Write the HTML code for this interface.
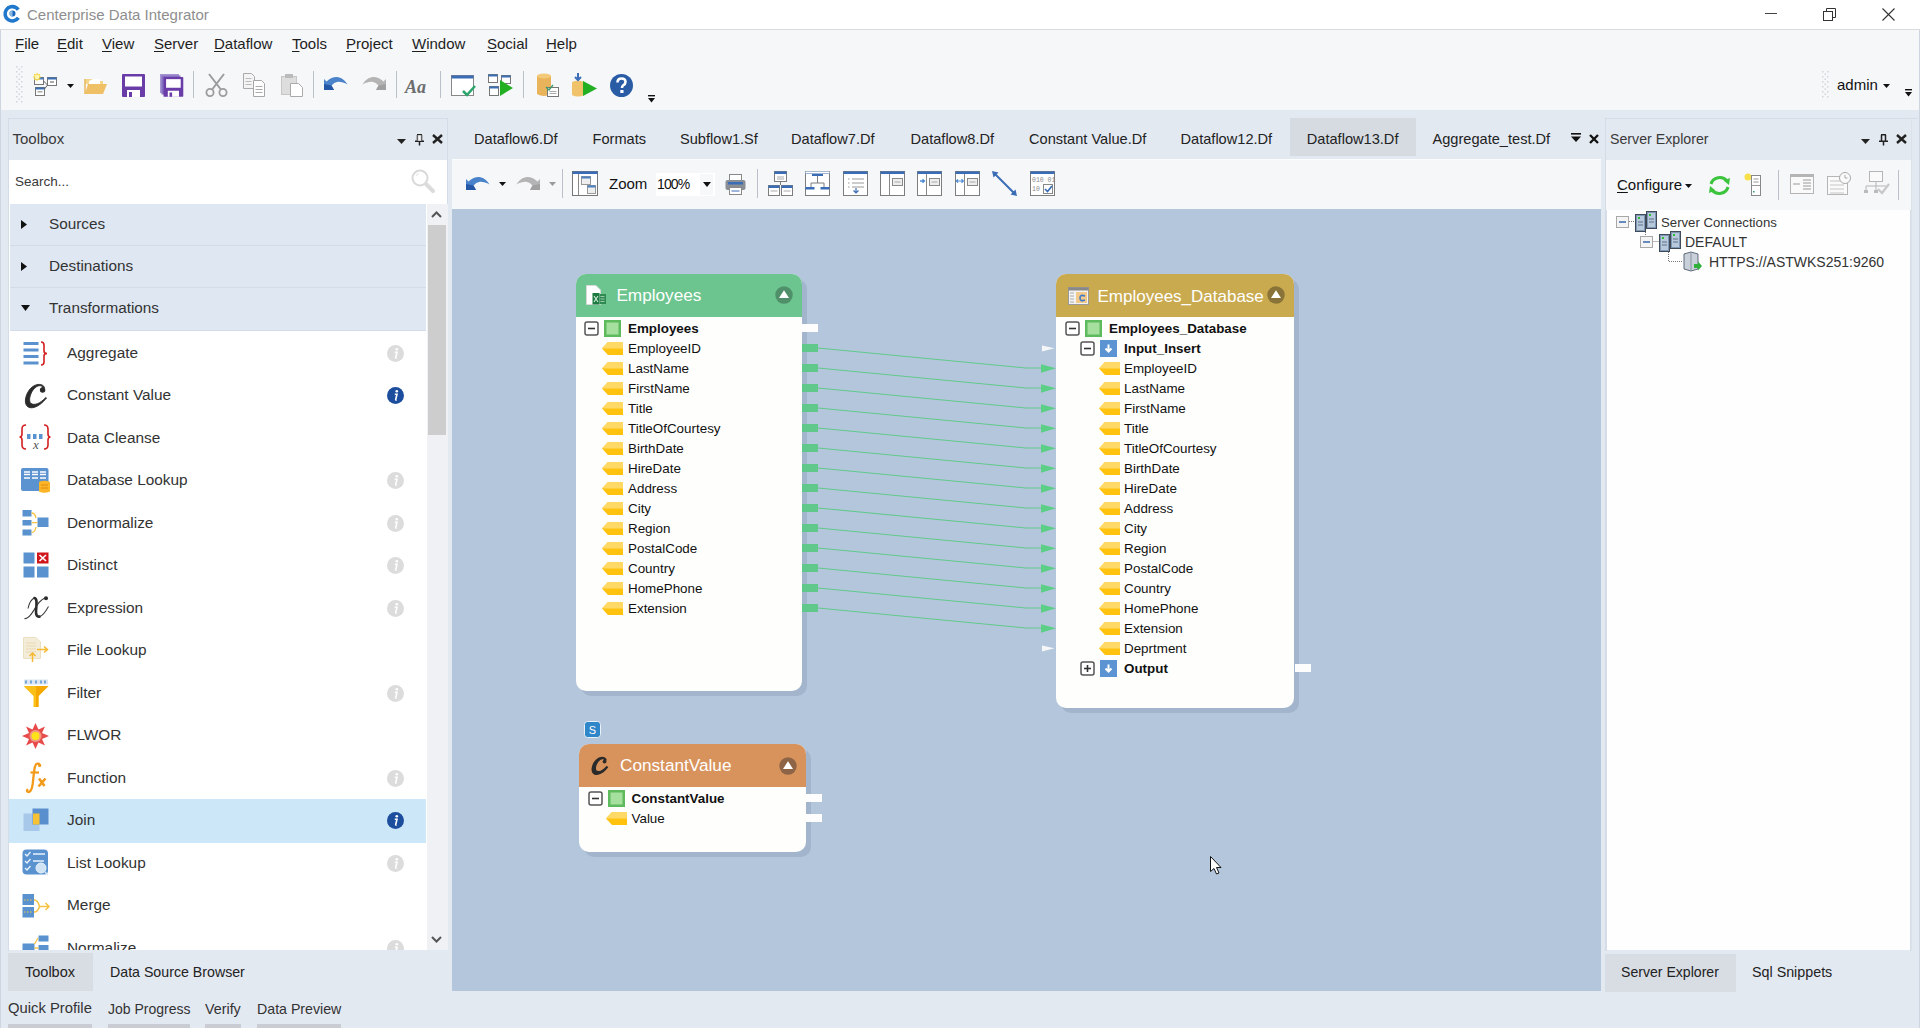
<!DOCTYPE html>
<html><head><meta charset="utf-8">
<style>
*{margin:0;padding:0;box-sizing:border-box}
html,body{width:1920px;height:1028px;overflow:hidden}
body{position:relative;background:#e3e9f1;font-family:"Liberation Sans",sans-serif;color:#222}
.a{position:absolute}
.t{position:absolute;white-space:nowrap;line-height:1}
svg{position:absolute;overflow:visible}
u{text-decoration:underline;text-underline-offset:2px}
</style></head><body>

<div class="a" style="left:0px;top:0px;width:1920px;height:29px;background:#fff;"></div>
<div class="a" style="left:0px;top:29px;width:1920px;height:1px;background:#d9dbde;"></div>
<svg style="left:3px;top:5px;" width="19" height="19" viewBox="0 0 19 19"><circle cx="9.3" cy="8.8" r="7.2" fill="none" stroke="#1f78cc" stroke-width="3.6" stroke-dasharray="36.5 8.7" transform="rotate(33 9.3 8.8)"/><circle cx="9.5" cy="8.6" r="3" fill="#1a68bd"/><path d="M6.5 8.6 A3 3 0 0 1 9.5 5.6 V11.6 A3 3 0 0 1 6.5 8.6Z" fill="#8fb8e0"/></svg>
<div class="t" style="left:27.00px;top:7.30px;font-size:15px;color:#8e8e8e;font-weight:normal;">Centerprise Data Integrator</div>
<svg style="left:1765px;top:13px;" width="12" height="1" viewBox="0 0 12 1"><rect x="0" y="0" width="12" height="1" fill="#444"/></svg>
<svg style="left:1823px;top:8px;" width="13" height="13" viewBox="0 0 13 13"><rect x="0.5" y="3.5" width="9" height="9" fill="none" stroke="#333"/><path d="M3.5 3.5V0.5H12.5V9.5H9.5" fill="none" stroke="#333"/></svg>
<svg style="left:1882px;top:8px;" width="13" height="13" viewBox="0 0 13 13"><path d="M0.5 0.5L12.5 12.5M12.5 0.5L0.5 12.5" stroke="#333" stroke-width="1.1"/></svg>
<div class="a" style="left:0px;top:30px;width:1920px;height:80px;background:#f5f7f9;"></div>
<div class="a" style="left:0px;top:30px;width:1px;height:998px;background:#cdd5e0;"></div>
<div class="a" style="left:1919px;top:30px;width:1px;height:998px;background:#cdd5e0;"></div>
<div class="t" style="left:15.00px;top:36.30px;font-size:15px;color:#1e1e1e;font-weight:normal;"><u>F</u>ile</div>
<div class="t" style="left:57.00px;top:36.30px;font-size:15px;color:#1e1e1e;font-weight:normal;"><u>E</u>dit</div>
<div class="t" style="left:102.00px;top:36.30px;font-size:15px;color:#1e1e1e;font-weight:normal;"><u>V</u>iew</div>
<div class="t" style="left:154.00px;top:36.30px;font-size:15px;color:#1e1e1e;font-weight:normal;"><u>S</u>erver</div>
<div class="t" style="left:214.00px;top:36.30px;font-size:15px;color:#1e1e1e;font-weight:normal;"><u>D</u>ataflow</div>
<div class="t" style="left:292.00px;top:36.30px;font-size:15px;color:#1e1e1e;font-weight:normal;"><u>T</u>ools</div>
<div class="t" style="left:346.00px;top:36.30px;font-size:15px;color:#1e1e1e;font-weight:normal;"><u>P</u>roject</div>
<div class="t" style="left:412.00px;top:36.30px;font-size:15px;color:#1e1e1e;font-weight:normal;"><u>W</u>indow</div>
<div class="t" style="left:487.00px;top:36.30px;font-size:15px;color:#1e1e1e;font-weight:normal;"><u>S</u>ocial</div>
<div class="t" style="left:546.00px;top:36.30px;font-size:15px;color:#1e1e1e;font-weight:normal;"><u>H</u>elp</div>
<svg style="left:16px;top:66px;" width="7" height="38" viewBox="0 0 7 38"><rect x="0" y="0" width="1.5" height="1.5" fill="#d3d7dc"/><rect x="5" y="0" width="1.5" height="1.5" fill="#d3d7dc"/><rect x="2.5" y="2.5" width="1.5" height="1.5" fill="#d3d7dc"/><rect x="0" y="5.0" width="1.5" height="1.5" fill="#d3d7dc"/><rect x="5" y="5.0" width="1.5" height="1.5" fill="#d3d7dc"/><rect x="2.5" y="7.5" width="1.5" height="1.5" fill="#d3d7dc"/><rect x="0" y="10.0" width="1.5" height="1.5" fill="#d3d7dc"/><rect x="5" y="10.0" width="1.5" height="1.5" fill="#d3d7dc"/><rect x="2.5" y="12.5" width="1.5" height="1.5" fill="#d3d7dc"/><rect x="0" y="15.0" width="1.5" height="1.5" fill="#d3d7dc"/><rect x="5" y="15.0" width="1.5" height="1.5" fill="#d3d7dc"/><rect x="2.5" y="17.5" width="1.5" height="1.5" fill="#d3d7dc"/><rect x="0" y="20.0" width="1.5" height="1.5" fill="#d3d7dc"/><rect x="5" y="20.0" width="1.5" height="1.5" fill="#d3d7dc"/><rect x="2.5" y="22.5" width="1.5" height="1.5" fill="#d3d7dc"/><rect x="0" y="25.0" width="1.5" height="1.5" fill="#d3d7dc"/><rect x="5" y="25.0" width="1.5" height="1.5" fill="#d3d7dc"/><rect x="2.5" y="27.5" width="1.5" height="1.5" fill="#d3d7dc"/><rect x="0" y="30.0" width="1.5" height="1.5" fill="#d3d7dc"/><rect x="5" y="30.0" width="1.5" height="1.5" fill="#d3d7dc"/><rect x="2.5" y="32.5" width="1.5" height="1.5" fill="#d3d7dc"/><rect x="0" y="35.0" width="1.5" height="1.5" fill="#d3d7dc"/><rect x="5" y="35.0" width="1.5" height="1.5" fill="#d3d7dc"/></svg>
<svg style="left:33px;top:72px;" width="25" height="25" viewBox="0 0 25 25"><rect x="1.5" y="5.5" width="9" height="7" fill="#fff" stroke="#777"/><rect x="1.5" y="5.5" width="9" height="2" fill="#4a7fc1"/><path d="M4 0.5L5 2.6L7.3 1.8L6.4 4L8.5 5L6.4 6L7.3 8.2L5 7.4L4 9.5L3 7.4L0.7 8.2L1.6 6L-0.5 5L1.6 4L0.7 1.8L3 2.6Z" fill="#f5d63a"/><circle cx="4" cy="5" r="2.3" fill="#fff6b0"/><rect x="14.5" y="5.5" width="9" height="8" fill="#fff" stroke="#777"/><rect x="14.5" y="5.5" width="9" height="2" fill="#3b6fb6"/><rect x="17" y="9" width="4" height="2" fill="#aaa"/><rect x="2.5" y="15.5" width="9" height="8" fill="#fff" stroke="#777"/><rect x="2.5" y="15.5" width="9" height="2" fill="#3b6fb6"/><rect x="4.5" y="19" width="5" height="1.5" fill="#aaa"/><path d="M10.5 9 L14.5 13 M11.5 17 L14.5 13" stroke="#666" stroke-width="1"/></svg>
<svg style="left:67px;top:84px;" width="7" height="4" viewBox="0 0 7 4"><path d="M0 0H7L3.5 4Z" fill="#111"/></svg>
<svg style="left:84px;top:76px;" width="24" height="19" viewBox="0 0 24 19"><path d="M1 3 H8 L10 5 H19 V8 H1Z" fill="#f3d58c"/><path d="M5 5 Q12 1 16 4 L16 8 H5Z" fill="#fff"/><path d="M1 18 L4 8 H23 L19 18Z" fill="#efc066"/><path d="M1 3V18" stroke="#e8b95a" stroke-width="1.5"/></svg>
<svg style="left:122px;top:74px;" width="23" height="23" viewBox="0 0 23 23"><rect x="0" y="0" width="23" height="23" rx="1" fill="#6a3ca8"/><rect x="3" y="2.5" width="17" height="10" fill="#fff"/><rect x="5" y="16" width="13" height="7" fill="#fff"/><rect x="7" y="18" width="3" height="5" fill="#6a3ca8"/></svg>
<svg style="left:160px;top:74px;" width="24" height="23" viewBox="0 0 24 23"><rect x="0" y="0" width="19" height="19" fill="#a595d2"/><rect x="1.5" y="1.5" width="19" height="19" fill="#8570c0"/><g transform="translate(3.5 3) scale(0.86)"><rect x="0" y="0" width="23" height="23" rx="1" fill="#6a3ca8"/><rect x="3" y="2.5" width="17" height="10" fill="#fff"/><rect x="5" y="16" width="13" height="7" fill="#fff"/><rect x="7" y="18" width="3" height="5" fill="#6a3ca8"/></g></svg>
<div class="a" style="left:193px;top:71px;width:1px;height:27px;background:#b9c0ca;"></div>
<svg style="left:205px;top:73px;" width="23" height="24" viewBox="0 0 23 24"><path d="M4 1 L15.5 16 M19 1 L7.5 16" stroke="#9c9c9c" stroke-width="2"/><circle cx="5" cy="19.5" r="3.6" fill="none" stroke="#9c9c9c" stroke-width="1.8"/><circle cx="18" cy="19.5" r="3.6" fill="none" stroke="#9c9c9c" stroke-width="1.8"/></svg>
<svg style="left:243px;top:73px;" width="22" height="24" viewBox="0 0 22 24"><path d="M0.5 0.5H8.5L11.5 3.5V15.5H0.5Z" fill="#f4f4f4" stroke="#aaa"/><path d="M2.5 5.5h6M2.5 8.5h6M2.5 11.5h6" stroke="#bbb"/><path d="M10.5 7.5H18.5L21.5 10.5V23.5H10.5Z" fill="#fff" stroke="#a6a6a6"/><path d="M12.5 13.5h7M12.5 16.5h7M12.5 19.5h7" stroke="#aaa"/></svg>
<svg style="left:281px;top:73px;" width="22" height="24" viewBox="0 0 22 24"><rect x="0.5" y="3.5" width="15" height="18" fill="#ddd" stroke="#c6c6c6"/><rect x="4" y="1" width="8" height="4" fill="#bbb"/><path d="M9.5 10.5H17.5L21.5 14.5V23.5H9.5Z" fill="#fff" stroke="#aaa"/></svg>
<div class="a" style="left:313px;top:71px;width:1px;height:27px;background:#b9c0ca;"></div>
<svg style="left:323px;top:76px;" width="25" height="15" viewBox="0 0 25 15"><path d="M1 3 L3.5 5.5 C7 2, 11 0.8, 14 1 C18 1.3, 22 4, 24.5 8.5 C21 6.5, 17 5.5, 14 6 C12 6.3, 10.5 7.5, 8.5 9.5 L11 14 H1 Z" fill="#4a83c9"/><path d="M1 8 L1 14 H11 L8.5 9.5Z" fill="#2457a6"/></svg>
<svg style="left:362px;top:76px;" width="25" height="15" viewBox="0 0 25 15"><path d="M24 3 L21.5 5.5 C18 2, 14 0.8, 11 1 C7 1.3, 3 4, 0.5 8.5 C4 6.5, 8 5.5, 11 6 C13 6.3, 14.5 7.5, 16.5 9.5 L14 14 H24 Z" fill="#b4b4b4"/><path d="M24 8 L24 14 H14 L16.5 9.5Z" fill="#a0a0a0"/></svg>
<div class="a" style="left:396px;top:71px;width:1px;height:27px;background:#b9c0ca;"></div>
<div class="t" style="left:405.00px;top:77.76px;font-size:18px;color:#6d6d6d;font-weight:bold;font-family:'Liberation Serif',serif;"><i>Aa</i></div>
<div class="a" style="left:440px;top:71px;width:1px;height:27px;background:#b9c0ca;"></div>
<svg style="left:451px;top:75px;" width="25" height="22" viewBox="0 0 25 22"><rect x="0.5" y="0.5" width="22" height="20" fill="#fff" stroke="#888"/><rect x="0.5" y="0.5" width="22" height="3" fill="#3a6db5"/><path d="M12 16 L16 20 L24 11" stroke="#2aa56c" stroke-width="2.5" fill="none"/></svg>
<svg style="left:488px;top:74px;" width="26" height="23" viewBox="0 0 26 23"><rect x="0.5" y="0.5" width="9" height="8" fill="#fff" stroke="#777"/><rect x="0.5" y="0.5" width="9" height="2" fill="#3b6fb6"/><rect x="13.5" y="1.5" width="9" height="8" fill="#fff" stroke="#777"/><rect x="13.5" y="1.5" width="9" height="2" fill="#3b6fb6"/><rect x="1.5" y="12.5" width="9" height="9" fill="#fff" stroke="#777"/><rect x="1.5" y="12.5" width="9" height="2" fill="#3b6fb6"/><path d="M12 6 L25 14 L12 22Z" fill="#22b022"/></svg>
<div class="a" style="left:523px;top:71px;width:1px;height:27px;background:#b9c0ca;"></div>
<svg style="left:537px;top:73px;" width="23" height="25" viewBox="0 0 23 25"><path d="M0 3 Q7 -1 14 3 V21 Q7 25 0 21Z" fill="#e9b35b"/><ellipse cx="7" cy="3" rx="7" ry="2.5" fill="#f3c978"/><rect x="10.5" y="14.5" width="11" height="9" fill="#fff" stroke="#777"/><path d="M12.5 18.5h7M12.5 20.5h7" stroke="#aaa"/><path d="M9 14 L12 17 L16 12" stroke="#3a9a6a" stroke-width="1.3" fill="none"/></svg>
<svg style="left:572px;top:73px;" width="25" height="24" viewBox="0 0 25 24"><path d="M0 9 Q6 6 12 9 V22 Q6 25 0 22Z" fill="#f0c26a"/><path d="M6 0V7 M3 4 L6 7 L9 4" stroke="#3c6fb8" stroke-width="2" fill="none"/><path d="M11 8 L25 15.5 L11 23Z" fill="#22b022"/></svg>
<svg style="left:610px;top:74px;" width="23" height="23" viewBox="0 0 23 23"><circle cx="11.5" cy="11.5" r="11.5" fill="#2a5ca6"/><path d="M7.5 8.5 Q7.5 4.5 11.5 4.5 Q15.5 4.5 15.5 8 Q15.5 10 13 11.5 Q12 12.2 12 14" stroke="#fff" stroke-width="2.6" fill="none"/><rect x="10.3" y="16" width="3.2" height="3" fill="#fff"/></svg>
<svg style="left:648px;top:95px;" width="7" height="9" viewBox="0 0 7 9"><rect x="0" y="0" width="7" height="1.4" fill="#111"/><path d="M0 3 H7 L3.5 7.5Z" fill="#111"/></svg>
<svg style="left:1822px;top:71px;" width="7" height="27" viewBox="0 0 7 27"><rect x="0" y="0" width="1.5" height="1.5" fill="#d3d7dc"/><rect x="5" y="0" width="1.5" height="1.5" fill="#d3d7dc"/><rect x="2.5" y="2.5" width="1.5" height="1.5" fill="#d3d7dc"/><rect x="0" y="5.0" width="1.5" height="1.5" fill="#d3d7dc"/><rect x="5" y="5.0" width="1.5" height="1.5" fill="#d3d7dc"/><rect x="2.5" y="7.5" width="1.5" height="1.5" fill="#d3d7dc"/><rect x="0" y="10.0" width="1.5" height="1.5" fill="#d3d7dc"/><rect x="5" y="10.0" width="1.5" height="1.5" fill="#d3d7dc"/><rect x="2.5" y="12.5" width="1.5" height="1.5" fill="#d3d7dc"/><rect x="0" y="15.0" width="1.5" height="1.5" fill="#d3d7dc"/><rect x="5" y="15.0" width="1.5" height="1.5" fill="#d3d7dc"/><rect x="2.5" y="17.5" width="1.5" height="1.5" fill="#d3d7dc"/><rect x="0" y="20.0" width="1.5" height="1.5" fill="#d3d7dc"/><rect x="5" y="20.0" width="1.5" height="1.5" fill="#d3d7dc"/><rect x="2.5" y="22.5" width="1.5" height="1.5" fill="#d3d7dc"/><rect x="0" y="25.0" width="1.5" height="1.5" fill="#d3d7dc"/><rect x="5" y="25.0" width="1.5" height="1.5" fill="#d3d7dc"/></svg>
<div class="t" style="left:1837.00px;top:77.30px;font-size:15px;color:#111;font-weight:normal;">admin</div>
<svg style="left:1883px;top:84px;" width="7" height="4" viewBox="0 0 7 4"><path d="M0 0H7L3.5 4Z" fill="#111"/></svg>
<svg style="left:1905px;top:89px;" width="7" height="9" viewBox="0 0 7 9"><rect x="0" y="0" width="7" height="1.4" fill="#111"/><path d="M0 3 H7 L3.5 7.5Z" fill="#111"/></svg>
<div class="a" style="left:8px;top:118px;width:440px;height:1px;background:#d4dce7;"></div>
<div class="a" style="left:8px;top:118px;width:1px;height:873px;background:#d4dce7;"></div>
<div class="a" style="left:447px;top:118px;width:1px;height:86px;background:#d4dce7;"></div>
<div class="t" style="left:12.50px;top:131.30px;font-size:15px;color:#3a3a3a;font-weight:normal;">Toolbox</div>
<svg style="left:397px;top:139px;" width="9" height="5" viewBox="0 0 9 5"><path d="M0 0H9L4.5 5Z" fill="#222"/></svg>
<svg style="left:415px;top:134px;" width="9" height="12" viewBox="0 0 9 12"><path d="M2 0.8H7M2.5 1V7M6.5 1V7M0 7.3H9M4.5 7.5V11.5" stroke="#222" stroke-width="1.5" fill="none"/><rect x="2.5" y="1" width="4" height="6" fill="#fff" opacity="0.6"/></svg>
<svg style="left:432px;top:134px;" width="11" height="10" viewBox="0 0 11 10"><path d="M1 1L10 9M10 1L1 9" stroke="#222" stroke-width="2.4"/></svg>
<div class="a" style="left:9px;top:160px;width:438px;height:44px;background:#fff;"></div>
<div class="t" style="left:15.00px;top:175.07px;font-size:13.5px;color:#3a3a3a;font-weight:normal;">Search...</div>
<svg style="left:410px;top:168px;" width="27" height="27" viewBox="0 0 27 27"><circle cx="10" cy="10" r="7.5" fill="none" stroke="#d9d9d9" stroke-width="2"/><path d="M16 16L23 23" stroke="#dcdcdc" stroke-width="4" stroke-linecap="round"/><path d="M6 8 Q7 6 9 5.5" stroke="#e6e6e6" stroke-width="1.2" fill="none"/></svg>
<div class="a" style="left:9px;top:204px;width:418px;height:746px;background:#fff;"></div>
<div class="a" style="left:10px;top:204px;width:416px;height:42px;background:#dfe7f2;"></div>
<div class="a" style="left:10px;top:245px;width:416px;height:1px;background:#d3dce8;"></div>
<svg style="left:21px;top:219.5px;" width="6" height="9" viewBox="0 0 6 9"><path d="M0 0L6 4.5L0 9Z" fill="#111"/></svg>
<div class="t" style="left:49.00px;top:215.55px;font-size:15.3px;color:#333;font-weight:normal;">Sources</div>
<div class="a" style="left:10px;top:246px;width:416px;height:42px;background:#dfe7f2;"></div>
<div class="a" style="left:10px;top:287px;width:416px;height:1px;background:#d3dce8;"></div>
<svg style="left:21px;top:261.5px;" width="6" height="9" viewBox="0 0 6 9"><path d="M0 0L6 4.5L0 9Z" fill="#111"/></svg>
<div class="t" style="left:49.00px;top:257.55px;font-size:15.3px;color:#333;font-weight:normal;">Destinations</div>
<div class="a" style="left:10px;top:288px;width:416px;height:43px;background:#dfe7f2;"></div>
<div class="a" style="left:10px;top:330px;width:416px;height:1px;background:#d3dce8;"></div>
<svg style="left:21px;top:305.0px;" width="9" height="6" viewBox="0 0 9 6"><path d="M0 0H9L4.5 6Z" fill="#111"/></svg>
<div class="t" style="left:49.00px;top:299.55px;font-size:15.3px;color:#333;font-weight:normal;">Transformations</div>
<div class="a" style="left:427px;top:204px;width:21px;height:746px;background:#eff1f4;"></div>
<svg style="left:431px;top:211px;" width="11" height="7" viewBox="0 0 11 7"><path d="M1 6L5.5 1.5L10 6" stroke="#555" stroke-width="2" fill="none"/></svg>
<div class="a" style="left:428px;top:225px;width:18px;height:210px;background:#cdcdcd;"></div>
<svg style="left:431px;top:936px;" width="11" height="7" viewBox="0 0 11 7"><path d="M1 1L5.5 5.5L10 1" stroke="#555" stroke-width="2" fill="none"/></svg>
<div class="a" style="left:9px;top:331px;width:418px;height:619px;overflow:hidden">
<div class="t" style="left:58.00px;top:13.96px;font-size:15.4px;color:#333;font-weight:normal;">Aggregate</div>
<svg style="left:377.5px;top:13.5px;" width="17" height="17" viewBox="0 0 17 17"><circle cx="8.5" cy="8.5" r="8.5" fill="#dcdcdc"/><circle cx="9.8" cy="4.3" r="1.3" fill="#fff"/><path d="M7.8 7.3 L10 7.3 L8.7 12.5 Q8.6 13.3 9.6 12.8" stroke="#fff" stroke-width="1.6" fill="none"/></svg>
<div class="t" style="left:58.00px;top:56.46px;font-size:15.4px;color:#333;font-weight:normal;">Constant Value</div>
<svg style="left:377.5px;top:56.0px;" width="17" height="17" viewBox="0 0 17 17"><circle cx="8.5" cy="8.5" r="8.5" fill="#1d4e9e"/><circle cx="9.8" cy="4.3" r="1.3" fill="#fff"/><path d="M7.8 7.3 L10 7.3 L8.7 12.5 Q8.6 13.3 9.6 12.8" stroke="#fff" stroke-width="1.6" fill="none"/></svg>
<div class="t" style="left:58.00px;top:98.96px;font-size:15.4px;color:#333;font-weight:normal;">Data Cleanse</div>
<div class="t" style="left:58.00px;top:141.46px;font-size:15.4px;color:#333;font-weight:normal;">Database Lookup</div>
<svg style="left:377.5px;top:141.0px;" width="17" height="17" viewBox="0 0 17 17"><circle cx="8.5" cy="8.5" r="8.5" fill="#dcdcdc"/><circle cx="9.8" cy="4.3" r="1.3" fill="#fff"/><path d="M7.8 7.3 L10 7.3 L8.7 12.5 Q8.6 13.3 9.6 12.8" stroke="#fff" stroke-width="1.6" fill="none"/></svg>
<div class="t" style="left:58.00px;top:183.96px;font-size:15.4px;color:#333;font-weight:normal;">Denormalize</div>
<svg style="left:377.5px;top:183.5px;" width="17" height="17" viewBox="0 0 17 17"><circle cx="8.5" cy="8.5" r="8.5" fill="#dcdcdc"/><circle cx="9.8" cy="4.3" r="1.3" fill="#fff"/><path d="M7.8 7.3 L10 7.3 L8.7 12.5 Q8.6 13.3 9.6 12.8" stroke="#fff" stroke-width="1.6" fill="none"/></svg>
<div class="t" style="left:58.00px;top:226.46px;font-size:15.4px;color:#333;font-weight:normal;">Distinct</div>
<svg style="left:377.5px;top:226.0px;" width="17" height="17" viewBox="0 0 17 17"><circle cx="8.5" cy="8.5" r="8.5" fill="#dcdcdc"/><circle cx="9.8" cy="4.3" r="1.3" fill="#fff"/><path d="M7.8 7.3 L10 7.3 L8.7 12.5 Q8.6 13.3 9.6 12.8" stroke="#fff" stroke-width="1.6" fill="none"/></svg>
<div class="t" style="left:58.00px;top:268.96px;font-size:15.4px;color:#333;font-weight:normal;">Expression</div>
<svg style="left:377.5px;top:268.5px;" width="17" height="17" viewBox="0 0 17 17"><circle cx="8.5" cy="8.5" r="8.5" fill="#dcdcdc"/><circle cx="9.8" cy="4.3" r="1.3" fill="#fff"/><path d="M7.8 7.3 L10 7.3 L8.7 12.5 Q8.6 13.3 9.6 12.8" stroke="#fff" stroke-width="1.6" fill="none"/></svg>
<div class="t" style="left:58.00px;top:311.46px;font-size:15.4px;color:#333;font-weight:normal;">File Lookup</div>
<div class="t" style="left:58.00px;top:353.96px;font-size:15.4px;color:#333;font-weight:normal;">Filter</div>
<svg style="left:377.5px;top:353.5px;" width="17" height="17" viewBox="0 0 17 17"><circle cx="8.5" cy="8.5" r="8.5" fill="#dcdcdc"/><circle cx="9.8" cy="4.3" r="1.3" fill="#fff"/><path d="M7.8 7.3 L10 7.3 L8.7 12.5 Q8.6 13.3 9.6 12.8" stroke="#fff" stroke-width="1.6" fill="none"/></svg>
<div class="t" style="left:58.00px;top:396.46px;font-size:15.4px;color:#333;font-weight:normal;">FLWOR</div>
<div class="t" style="left:58.00px;top:438.96px;font-size:15.4px;color:#333;font-weight:normal;">Function</div>
<svg style="left:377.5px;top:438.5px;" width="17" height="17" viewBox="0 0 17 17"><circle cx="8.5" cy="8.5" r="8.5" fill="#dcdcdc"/><circle cx="9.8" cy="4.3" r="1.3" fill="#fff"/><path d="M7.8 7.3 L10 7.3 L8.7 12.5 Q8.6 13.3 9.6 12.8" stroke="#fff" stroke-width="1.6" fill="none"/></svg>
<div class="a" style="left:0px;top:468px;width:417px;height:44px;background:#cce7f8;"></div>
<div class="t" style="left:58.00px;top:481.46px;font-size:15.4px;color:#333;font-weight:normal;">Join</div>
<svg style="left:377.5px;top:481.0px;" width="17" height="17" viewBox="0 0 17 17"><circle cx="8.5" cy="8.5" r="8.5" fill="#1d4e9e"/><circle cx="9.8" cy="4.3" r="1.3" fill="#fff"/><path d="M7.8 7.3 L10 7.3 L8.7 12.5 Q8.6 13.3 9.6 12.8" stroke="#fff" stroke-width="1.6" fill="none"/></svg>
<div class="t" style="left:58.00px;top:523.96px;font-size:15.4px;color:#333;font-weight:normal;">List Lookup</div>
<svg style="left:377.5px;top:523.5px;" width="17" height="17" viewBox="0 0 17 17"><circle cx="8.5" cy="8.5" r="8.5" fill="#dcdcdc"/><circle cx="9.8" cy="4.3" r="1.3" fill="#fff"/><path d="M7.8 7.3 L10 7.3 L8.7 12.5 Q8.6 13.3 9.6 12.8" stroke="#fff" stroke-width="1.6" fill="none"/></svg>
<div class="t" style="left:58.00px;top:566.46px;font-size:15.4px;color:#333;font-weight:normal;">Merge</div>
<div class="t" style="left:58.00px;top:608.96px;font-size:15.4px;color:#333;font-weight:normal;">Normalize</div>
<svg style="left:377.5px;top:608.5px;" width="17" height="17" viewBox="0 0 17 17"><circle cx="8.5" cy="8.5" r="8.5" fill="#dcdcdc"/><circle cx="9.8" cy="4.3" r="1.3" fill="#fff"/><path d="M7.8 7.3 L10 7.3 L8.7 12.5 Q8.6 13.3 9.6 12.8" stroke="#fff" stroke-width="1.6" fill="none"/></svg>
<svg style="left:14px;top:10px;" width="26" height="25" viewBox="0 0 26 25"><rect x="0.5" y="1" width="15" height="3" fill="#5a92d0"/><rect x="0.5" y="7.5" width="15" height="3" fill="#5a92d0"/><rect x="0.5" y="14" width="15" height="3" fill="#5a92d0"/><rect x="0.5" y="20.5" width="15" height="3" fill="#5a92d0"/><path d="M18 1 Q21 1 21 4 V10 Q21 12.5 24 12.5 Q21 12.5 21 15 V21 Q21 24 18 24" stroke="#d42020" stroke-width="1.6" fill="none"/></svg>
<svg style="left:9px;top:47px" width="36" height="36" viewBox="0 0 36 36"><path d="M26.5 9.5 C25 5.5, 18 5, 13 10 C8 15, 5.5 24, 9 28 C12 31.5, 20 30.5, 28.5 20 L27.8 19.4 C22 26, 16 27.5, 13 25.5 C10.5 23.5, 11.5 17, 15 12 C17.5 8.5, 21 7, 23.5 8 C24.8 8.6, 24.5 10, 23.5 10.5Z" fill="#2b2b2b" stroke="#2b2b2b" stroke-width="0.9"/><circle cx="24.6" cy="12" r="2.7" fill="#2b2b2b"/></svg>
<svg style="left:11px;top:93px;" width="31" height="28" viewBox="0 0 31 28"><path d="M6 1 Q2 1 2 5 V10 Q2 13 -0.5 13 Q2 13 2 16 V21 Q2 25 6 25" stroke="#d42020" stroke-width="1.6" fill="none"/><path d="M24 1 Q28 1 28 5 V10 Q28 13 30.5 13 Q28 13 28 16 V21 Q28 25 24 25" stroke="#d42020" stroke-width="1.6" fill="none"/><rect x="7" y="10" width="3.5" height="5" fill="#5a92d0"/><rect x="13" y="10" width="3.5" height="5" fill="#5a92d0"/><rect x="19" y="10" width="3.5" height="5" fill="#5a92d0"/></svg>
<div class="t" style="left:24.00px;top:107.00px;font-size:13px;color:#555;font-weight:normal;font-family:'Liberation Serif',serif;"><i>x</i></div>
<svg style="left:12px;top:137px;" width="29" height="26" viewBox="0 0 29 26"><rect x="0" y="0" width="27.5" height="23" rx="2" fill="#5b92d0"/><path d="M3 4h6M3 6.5h6M11 4h6M11 6.5h6M19 4h6M19 6.5h6M3 10h6M11 10h6M19 10h6" stroke="#fff" stroke-width="1.3"/><path d="M18 14 Q23 11.5 29 14 V23.5 Q23 26 18 23.5Z" fill="#fbb526"/><path d="M20 17h7M20 20h7" stroke="#e08a10" stroke-width="1"/></svg>
<svg style="left:13px;top:179px;" width="27" height="26" viewBox="0 0 27 26"><rect x="0.5" y="0" width="9" height="6.5" fill="#5a92d0"/><rect x="0.5" y="10" width="9" height="5.5" fill="#5a92d0"/><rect x="0.5" y="19.5" width="9" height="6" fill="#5a92d0"/><rect x="15.5" y="7.5" width="11" height="9.5" fill="#5a92d0"/><path d="M9.5 3 Q13 3 14 8 M9.5 12.7 H15.5 M9.5 22.5 Q13 22.5 14 17" stroke="#f5c242" stroke-width="1.3" fill="none"/></svg>
<svg style="left:14px;top:221px;" width="26" height="26" viewBox="0 0 26 26"><rect x="0.5" y="0.5" width="11" height="11" fill="#5a92d0"/><rect x="14" y="0.5" width="11.5" height="11" fill="#d0161b"/><path d="M16.5 3 L23 9 M23 3 L16.5 9" stroke="#fff" stroke-width="1.7"/><rect x="0.5" y="14.5" width="11" height="11" fill="#5a92d0"/><rect x="14" y="14.5" width="11.5" height="11" fill="#5a92d0"/></svg>
<svg style="left:9px;top:259px;" width="36" height="36" viewBox="0 0 36 36"><path d="M10 18.5 C11 14, 13.5 9, 16.5 8" stroke="#333" stroke-width="1.1" fill="none"/><path d="M16.5 8 C19.5 8.5, 18.5 15, 18 21 C17.8 25, 19 27, 21.5 26.6" stroke="#2b2b2b" stroke-width="2.6" fill="none" stroke-linecap="round"/><path d="M21.5 26.6 C25 26, 28 21, 30.5 16.5" stroke="#444" stroke-width="1.1" fill="none"/><path d="M6.5 28.5 C10 29.5, 13 25, 16 20 C19 14.5, 22 10, 27 8" stroke="#333" stroke-width="1.2" fill="none"/><circle cx="28" cy="8.2" r="2" fill="#2b2b2b"/></svg>
<svg style="left:14px;top:306px;" width="26" height="26" viewBox="0 0 26 26"><path d="M0.5 0.5H13L17.5 5V21.5H0.5Z" fill="#f3ecd8" stroke="#eadfc0"/><path d="M3 6h10M3 9h10M3 12h10M3 15h10" stroke="#ead9b0" stroke-width="1"/><path d="M14 12.5H24M21 9.5L24.5 12.5L21 15.5" stroke="#f5b932" stroke-width="1.5" fill="none"/><path d="M9.5 25V16M6.5 19L9.5 16L12.5 19" stroke="#f5b932" stroke-width="1.5" fill="none"/></svg>
<svg style="left:14px;top:348px;" width="26" height="29" viewBox="0 0 26 29"><rect x="1" y="0.5" width="24" height="5" fill="#dbe6f2"/><path d="M3 1.5v3M8 1.5v3M13 1.5v3M18 1.5v3M22 1.5v3" stroke="#5a92d0" stroke-width="1.5"/><path d="M0.5 7H25.5L15.5 17V28H10.5V17Z" fill="#fbbf1a"/><path d="M13 7H25.5L15.5 17V28H13Z" fill="#f6a800"/></svg>
<svg style="left:13px;top:392px;" width="27" height="26" viewBox="0 0 27 26"><path d="M13.5 0 L16.5 6.5 L23 3.5 L20 10 L27 13 L20 16 L23 22.5 L16.5 19.5 L13.5 26 L10.5 19.5 L4 22.5 L7 16 L0 13 L7 10 L4 3.5 L10.5 6.5Z" fill="#e84b4b"/><circle cx="13.5" cy="13" r="6" fill="#f29a82"/><circle cx="13.5" cy="13" r="4" fill="#ffe21a"/></svg>
<svg style="left:9px;top:428px;" width="36" height="36" viewBox="0 0 36 36"><path d="M22 6.2 C21 4, 18 4, 17 7.5 C16 11, 15.5 18, 14.7 25 C14 30, 13 32.8, 10.5 33 C9 33, 8.6 31.5, 9.3 30.8" stroke="#f39a1a" stroke-width="2.3" fill="none" stroke-linecap="round"/><circle cx="21.6" cy="6.4" r="1.6" fill="#f39a1a"/><path d="M12.5 13.5H21" stroke="#f39a1a" stroke-width="2.2"/><path d="M21 19.5L26.5 27M27.5 19.5L20.5 27.5" stroke="#f39a1a" stroke-width="2.6"/></svg>
<svg style="left:14px;top:477px;" width="26" height="24" viewBox="0 0 26 24"><rect x="0.5" y="5.5" width="16" height="17.5" fill="#a8c8ea"/><rect x="9.5" y="0.5" width="16" height="16" fill="#5a8fce"/><rect x="10" y="5.5" width="6.5" height="11" fill="#f6c233"/></svg>
<svg style="left:13px;top:518px;" width="27" height="27" viewBox="0 0 27 27"><rect x="0.5" y="0.5" width="25.5" height="25" rx="4" fill="#5a92d0"/><path d="M3 5 L5 7 L8.5 3M3 12 L5 14 L8.5 10M3 19 L5 21 L8.5 17" stroke="#e8f2fb" stroke-width="1.3" fill="none"/><path d="M11 5h12M11 12h11" stroke="#e8f2fb" stroke-width="1.3"/><circle cx="19" cy="19" r="5" fill="#cfe3f4" stroke="#e8f2fb"/><path d="M22.5 22.5 L26 26" stroke="#cfe3f4" stroke-width="1.5"/></svg>
<svg style="left:13px;top:563px;" width="28" height="24" viewBox="0 0 28 24"><rect x="0.5" y="0" width="11.5" height="11" fill="#5a92d0"/><rect x="0.5" y="13" width="11.5" height="10.5" fill="#5a92d0"/><path d="M2 6h8M2 18h8" stroke="#f5c242" stroke-width="1" stroke-dasharray="1.5 1.5"/><path d="M12 6 Q16 6 17.5 12.5 Q16 18 12 18 M17.5 12.5 H27 M23.5 9 L27 12.5 L23.5 16" stroke="#f5c242" stroke-width="1.5" fill="none"/></svg>
<svg style="left:13px;top:604px;" width="27" height="15" viewBox="0 0 27 15"><rect x="16.5" y="0.5" width="10" height="6" fill="#5a92d0"/><rect x="0.5" y="8.5" width="12" height="7" fill="#5a92d0"/><rect x="16.5" y="10" width="10" height="6" fill="#5a92d0"/><path d="M12.5 9 L16 3 M12.5 13 H16.5" stroke="#f5c242" stroke-width="1.3" fill="none"/></svg>
</div>
<div class="a" style="left:8px;top:951px;width:440px;height:40px;background:#e3e9f1;"></div>
<div class="a" style="left:8px;top:953px;width:85px;height:38px;background:#d8dce3;"></div>
<div class="t" style="left:25.00px;top:964.73px;font-size:14.5px;color:#222;font-weight:normal;">Toolbox</div>
<div class="t" style="left:110.00px;top:964.98px;font-size:14.2px;color:#222;font-weight:normal;">Data Source Browser</div>
<div class="t" style="left:8.00px;top:1001.47px;font-size:14.8px;color:#333;font-weight:normal;">Quick Profile</div>
<div class="a" style="left:8px;top:1024px;width:84px;height:4px;background:#c9cdd3;"></div>
<div class="t" style="left:108.00px;top:1002.15px;font-size:14.0px;color:#333;font-weight:normal;">Job Progress</div>
<div class="a" style="left:108px;top:1024px;width:82px;height:4px;background:#c9cdd3;"></div>
<div class="t" style="left:205.00px;top:1001.90px;font-size:14.3px;color:#333;font-weight:normal;">Verify</div>
<div class="a" style="left:205px;top:1024px;width:36px;height:4px;background:#c9cdd3;"></div>
<div class="t" style="left:257.00px;top:1001.98px;font-size:14.2px;color:#333;font-weight:normal;">Data Preview</div>
<div class="a" style="left:257px;top:1024px;width:84px;height:4px;background:#c9cdd3;"></div>
<div class="a" style="left:1290px;top:118px;width:126px;height:38px;background:#d6dbe2;"></div>
<div class="t" style="left:474.00px;top:131.64px;font-size:14.6px;color:#222;font-weight:normal;">Dataflow6.Df</div>
<div class="t" style="left:592.50px;top:131.64px;font-size:14.6px;color:#222;font-weight:normal;">Formats</div>
<div class="t" style="left:680.00px;top:131.64px;font-size:14.6px;color:#222;font-weight:normal;">Subflow1.Sf</div>
<div class="t" style="left:791.00px;top:131.64px;font-size:14.6px;color:#222;font-weight:normal;">Dataflow7.Df</div>
<div class="t" style="left:910.50px;top:131.64px;font-size:14.6px;color:#222;font-weight:normal;">Dataflow8.Df</div>
<div class="t" style="left:1029.00px;top:131.64px;font-size:14.6px;color:#222;font-weight:normal;">Constant Value.Df</div>
<div class="t" style="left:1180.50px;top:131.64px;font-size:14.6px;color:#222;font-weight:normal;">Dataflow12.Df</div>
<div class="t" style="left:1306.80px;top:131.64px;font-size:14.6px;color:#222;font-weight:normal;">Dataflow13.Df</div>
<div class="t" style="left:1432.50px;top:131.64px;font-size:14.6px;color:#222;font-weight:normal;">Aggregate_test.Df</div>
<svg style="left:1571px;top:133px;" width="10" height="10" viewBox="0 0 10 10"><rect x="0" y="0" width="10" height="1.6" fill="#111"/><path d="M0 3.5H10L5 9Z" fill="#111"/></svg>
<svg style="left:1589px;top:134px;" width="10" height="10" viewBox="0 0 10 10"><path d="M1 1L9 9M9 1L1 9" stroke="#111" stroke-width="2.3"/></svg>
<div class="a" style="left:452px;top:159px;width:1149px;height:50px;background:#f5f7f9;"></div>
<div class="a" style="left:452px;top:159px;width:1149px;height:1px;background:#fbfcfd;"></div>
<svg style="left:465px;top:176px;" width="25" height="15" viewBox="0 0 25 15"><path d="M1 3 L3.5 5.5 C7 2, 11 0.8, 14 1 C18 1.3, 22 4, 24.5 8.5 C21 6.5, 17 5.5, 14 6 C12 6.3, 10.5 7.5, 8.5 9.5 L11 14 H1 Z" fill="#4a83c9"/><path d="M1 8 L1 14 H11 L8.5 9.5Z" fill="#2457a6"/></svg>
<svg style="left:499px;top:182px;" width="7" height="4" viewBox="0 0 7 4"><path d="M0 0H7L3.5 4Z" fill="#111"/></svg>
<svg style="left:516px;top:176px;" width="25" height="15" viewBox="0 0 25 15"><path d="M24 3 L21.5 5.5 C18 2, 14 0.8, 11 1 C7 1.3, 3 4, 0.5 8.5 C4 6.5, 8 5.5, 11 6 C13 6.3, 14.5 7.5, 16.5 9.5 L14 14 H24 Z" fill="#b4b4b4"/><path d="M24 8 L24 14 H14 L16.5 9.5Z" fill="#a0a0a0"/></svg>
<svg style="left:549px;top:182px;" width="7" height="4" viewBox="0 0 7 4"><path d="M0 0H7L3.5 4Z" fill="#9a9a9a"/></svg>
<div class="a" style="left:562px;top:169px;width:1px;height:29px;background:#b9c0ca;"></div>
<svg style="left:572px;top:171px;" width="26" height="25" viewBox="0 0 26 25"><rect x="0.5" y="0.5" width="25" height="24" fill="#fff" stroke="#777"/><rect x="0.5" y="0.5" width="25" height="2.5" fill="#3a6db5"/><path d="M6.5 3V24" stroke="#888"/><rect x="9.5" y="5.5" width="9" height="8" fill="#eee" stroke="#999"/><rect x="9.5" y="5.5" width="9" height="2" fill="#4a7fc1"/><rect x="15.5" y="14.5" width="8" height="8" fill="#eee" stroke="#999"/><rect x="15.5" y="14.5" width="8" height="2" fill="#4a7fc1"/></svg>
<div class="t" style="left:609.00px;top:175.80px;font-size:15px;color:#111;font-weight:normal;">Zoom</div>
<div class="a" style="left:656px;top:173px;width:59px;height:23px;background:#fff;"></div>
<div class="t" style="left:657.00px;top:176.65px;font-size:14px;color:#111;font-weight:normal;letter-spacing:-0.9px;">100%</div>
<div class="a" style="left:700px;top:174px;width:13px;height:21px;background:#f7f8fa;"></div>
<svg style="left:703px;top:182px;" width="8" height="5" viewBox="0 0 8 5"><path d="M0 0H8L4.0 5Z" fill="#111"/></svg>
<svg style="left:725px;top:174px;" width="21" height="21" viewBox="0 0 21 21"><rect x="4.5" y="0.5" width="12" height="6" fill="#fff" stroke="#888"/><rect x="0.5" y="6" width="20" height="10" rx="2" fill="#8a8f96"/><rect x="3" y="8" width="15" height="2.5" fill="#3a6db5"/><rect x="4.5" y="13.5" width="12" height="7" fill="#fff" stroke="#888"/><path d="M6.5 17h8" stroke="#3a6db5"/></svg>
<div class="a" style="left:757px;top:169px;width:1px;height:29px;background:#b9c0ca;"></div>
<svg style="left:768px;top:171px;" width="25" height="25" viewBox="0 0 25 25"><rect x="6.5" y="0.5" width="12" height="10" fill="#fff" stroke="#7d7d7d"/><rect x="6.5" y="0.5" width="12" height="2.5" fill="#3a6db5"/><path d="M9 6h7M9 8h7" stroke="#aaa"/><path d="M12.5 11V14" stroke="#7d7d7d"/><rect x="0.5" y="14.5" width="11" height="10" fill="#fff" stroke="#7d7d7d"/><rect x="0.5" y="14.5" width="11" height="2.5" fill="#3a6db5"/><rect x="13.5" y="14.5" width="11" height="10" fill="#fff" stroke="#7d7d7d"/><rect x="13.5" y="14.5" width="11" height="2.5" fill="#3a6db5"/><path d="M2.5 20h7M15.5 20h7" stroke="#aaa"/></svg>
<svg style="left:805px;top:171px;" width="25" height="25" viewBox="0 0 25 25"><rect x="0.5" y="0.5" width="24" height="24" fill="#fff" stroke="#7d7d7d"/><rect x="0.5" y="0.5" width="24" height="2.5" fill="#3a6db5"/><rect x="0.5" y="0.5" width="24" height="0" fill="none"/><rect x="7" y="2.5" width="11" height="2.5" fill="#3a6db5"/><path d="M12.5 5V12 M6 12H19 M6 12V16 M19 12V16" stroke="#7d7d7d" fill="none"/><rect x="0.5" y="16" width="9" height="2.5" fill="#3a6db5"/><rect x="15.5" y="16" width="9" height="2.5" fill="#3a6db5"/><rect x="0.5" y="0.5" width="24" height="2" fill="#fff"/></svg>
<svg style="left:843px;top:171px;" width="25" height="25" viewBox="0 0 25 25"><rect x="0.5" y="0.5" width="24" height="24" fill="#fff" stroke="#7d7d7d"/><rect x="0.5" y="0.5" width="24" height="2.5" fill="#3a6db5"/><path d="M5 8h1.5M9 8h12M5 12h1.5M9 12h12M5 16h1.5M9 16h12" stroke="#999"/><path d="M13 17V22M10.5 19.5L13 22L15.5 19.5" stroke="#3a6db5" stroke-width="1.2" fill="none"/></svg>
<svg style="left:880px;top:171px;" width="25" height="25" viewBox="0 0 25 25"><rect x="0.5" y="0.5" width="24" height="24" fill="#fff" stroke="#7d7d7d"/><rect x="0.5" y="0.5" width="24" height="2.5" fill="#3a6db5"/><path d="M9.5 3V24" stroke="#888"/><rect x="12.5" y="7.5" width="10" height="7" fill="#eee" stroke="#888"/><path d="M14.5 11h6" stroke="#aaa"/></svg>
<svg style="left:917px;top:171px;" width="25" height="25" viewBox="0 0 25 25"><rect x="0.5" y="0.5" width="24" height="24" fill="#fff" stroke="#7d7d7d"/><rect x="0.5" y="0.5" width="24" height="2.5" fill="#3a6db5"/><path d="M9.5 3V24" stroke="#888"/><rect x="12.5" y="7.5" width="10" height="7" fill="#eee" stroke="#888"/><path d="M14.5 11h6" stroke="#aaa"/><path d="M3 10H7M5.5 8.3L7.5 10L5.5 11.7" stroke="#4a8ad0" stroke-width="1.3" fill="none"/></svg>
<svg style="left:955px;top:171px;" width="25" height="25" viewBox="0 0 25 25"><rect x="0.5" y="0.5" width="24" height="24" fill="#fff" stroke="#7d7d7d"/><rect x="0.5" y="0.5" width="24" height="2.5" fill="#3a6db5"/><path d="M9.5 3V24" stroke="#888"/><rect x="12.5" y="7.5" width="10" height="7" fill="#eee" stroke="#888"/><path d="M14.5 11h6" stroke="#aaa"/><path d="M1.5 10H8M3 8.3L1.3 10L3 11.7M6.5 8.3L8.3 10L6.5 11.7" stroke="#4a8ad0" stroke-width="1.2" fill="none"/></svg>
<svg style="left:992px;top:171px;" width="26" height="25" viewBox="0 0 26 25"><path d="M2 2L22 22" stroke="#3a6db5" stroke-width="2"/><path d="M0 0L6.5 1.5L1.5 6.5Z M25 25L18.5 23.5L23.5 18.5Z" fill="#3a6db5"/></svg>
<svg style="left:1030px;top:171px;" width="25" height="25" viewBox="0 0 25 25"><rect x="0.5" y="0.5" width="24" height="24" fill="#fff" stroke="#7d7d7d"/><rect x="0.5" y="0.5" width="24" height="2.5" fill="#3a6db5"/><text x="2" y="11" font-size="6.5" fill="#888" font-family="Liberation Mono">010 01</text><text x="2" y="20" font-size="6.5" fill="#888" font-family="Liberation Mono">10</text><rect x="13.5" y="13.5" width="9" height="9" fill="#fff" stroke="#888"/><path d="M15 18L17.5 20.5L22 15" stroke="#3a6db5" stroke-width="1.7" fill="none"/></svg>
<div class="a" style="left:452px;top:209px;width:1149px;height:782px;background:#b4c6dc;"></div>
<svg style="left:452px;top:209px;" width="1149" height="782" viewBox="0 0 1149 782"><path d="M366 139 L574 159 L590 159" stroke="#61c98b" stroke-width="1.15" fill="none"/><path d="M366 159 L574 179 L590 179" stroke="#61c98b" stroke-width="1.15" fill="none"/><path d="M366 179 L574 199 L590 199" stroke="#61c98b" stroke-width="1.15" fill="none"/><path d="M366 199 L574 219 L590 219" stroke="#61c98b" stroke-width="1.15" fill="none"/><path d="M366 219 L574 239 L590 239" stroke="#61c98b" stroke-width="1.15" fill="none"/><path d="M366 239 L574 259 L590 259" stroke="#61c98b" stroke-width="1.15" fill="none"/><path d="M366 259 L574 279 L590 279" stroke="#61c98b" stroke-width="1.15" fill="none"/><path d="M366 279 L574 299 L590 299" stroke="#61c98b" stroke-width="1.15" fill="none"/><path d="M366 299 L574 319 L590 319" stroke="#61c98b" stroke-width="1.15" fill="none"/><path d="M366 319 L574 339 L590 339" stroke="#61c98b" stroke-width="1.15" fill="none"/><path d="M366 339 L574 359 L590 359" stroke="#61c98b" stroke-width="1.15" fill="none"/><path d="M366 359 L574 379 L590 379" stroke="#61c98b" stroke-width="1.15" fill="none"/><path d="M366 379 L574 399 L590 399" stroke="#61c98b" stroke-width="1.15" fill="none"/><path d="M366 399 L574 419 L590 419" stroke="#61c98b" stroke-width="1.15" fill="none"/></svg>
<div class="a" style="left:581px;top:279px;width:226px;height:417px;background:#a3b5cc;border-radius:10px;"></div>
<div class="a" style="left:576px;top:274px;width:226px;height:417px;background:#fefefc;border-radius:10px;overflow:hidden;"></div>
<div class="a" style="left:576px;top:274px;width:226px;height:43px;background:#6cc48e;border-radius:10px 10px 0 0;"></div>
<svg style="left:586px;top:285px;" width="22" height="22" viewBox="0 0 22 22"><path d="M0.5 0.5H10L14.5 5V19.5H0.5Z" fill="#fff" stroke="#d8d8d8"/><rect x="6.5" y="8" width="7" height="11.5" fill="#1b7a3f"/><rect x="13.5" y="9" width="6.5" height="10" fill="#2f8a52"/><path d="M8 11L12 17M12 11L8 17" stroke="#d9efe0" stroke-width="1.1"/><path d="M14.5 11.5h4M14.5 14h4M14.5 16.5h4" stroke="#9cc9ab" stroke-width="1"/></svg>
<div class="t" style="left:616.40px;top:287.44px;font-size:17.2px;color:#fff;font-weight:normal;">Employees</div>
<svg style="left:774.5px;top:286px;" width="18" height="18" viewBox="0 0 18 18"><circle cx="9" cy="9" r="8.7" fill="#4f8f69"/><path d="M9 4.2L14 12H4Z" fill="#fff"/></svg>
<svg style="left:583.5px;top:320.5px;" width="15" height="15" viewBox="0 0 15 15"><rect x="1" y="1" width="13" height="13" rx="2" fill="#fff" stroke="#555" stroke-width="1.5"/><path d="M4 7.5H11" stroke="#333" stroke-width="1.6"/></svg>
<svg style="left:604px;top:319.5px;" width="17" height="17" viewBox="0 0 17 17"><rect x="0" y="0" width="17" height="17" fill="#5dbb5d"/><rect x="2.5" y="2.5" width="12" height="12" fill="#a6e09e"/></svg>
<div class="t" style="left:628.00px;top:321.66px;font-size:13.4px;color:#111;font-weight:bold;">Employees</div>
<div class="a" style="left:802px;top:324px;width:16px;height:8px;background:#fdfdfd;"></div>
<svg style="left:602px;top:341.5px;" width="21" height="13" viewBox="0 0 21 13"><path d="M6 0H21V13H6L0 6.5Z" fill="#ffc20e"/><path d="M6 0H21V6.5H0Z" fill="#ffd966"/></svg>
<div class="t" style="left:628.00px;top:341.66px;font-size:13.4px;color:#111;font-weight:normal;">EmployeeID</div>
<div class="a" style="left:802px;top:344px;width:16px;height:8px;background:#5fc88a;"></div>
<svg style="left:602px;top:361.5px;" width="21" height="13" viewBox="0 0 21 13"><path d="M6 0H21V13H6L0 6.5Z" fill="#ffc20e"/><path d="M6 0H21V6.5H0Z" fill="#ffd966"/></svg>
<div class="t" style="left:628.00px;top:361.66px;font-size:13.4px;color:#111;font-weight:normal;">LastName</div>
<div class="a" style="left:802px;top:364px;width:16px;height:8px;background:#5fc88a;"></div>
<svg style="left:602px;top:381.5px;" width="21" height="13" viewBox="0 0 21 13"><path d="M6 0H21V13H6L0 6.5Z" fill="#ffc20e"/><path d="M6 0H21V6.5H0Z" fill="#ffd966"/></svg>
<div class="t" style="left:628.00px;top:381.66px;font-size:13.4px;color:#111;font-weight:normal;">FirstName</div>
<div class="a" style="left:802px;top:384px;width:16px;height:8px;background:#5fc88a;"></div>
<svg style="left:602px;top:401.5px;" width="21" height="13" viewBox="0 0 21 13"><path d="M6 0H21V13H6L0 6.5Z" fill="#ffc20e"/><path d="M6 0H21V6.5H0Z" fill="#ffd966"/></svg>
<div class="t" style="left:628.00px;top:401.66px;font-size:13.4px;color:#111;font-weight:normal;">Title</div>
<div class="a" style="left:802px;top:404px;width:16px;height:8px;background:#5fc88a;"></div>
<svg style="left:602px;top:421.5px;" width="21" height="13" viewBox="0 0 21 13"><path d="M6 0H21V13H6L0 6.5Z" fill="#ffc20e"/><path d="M6 0H21V6.5H0Z" fill="#ffd966"/></svg>
<div class="t" style="left:628.00px;top:421.66px;font-size:13.4px;color:#111;font-weight:normal;">TitleOfCourtesy</div>
<div class="a" style="left:802px;top:424px;width:16px;height:8px;background:#5fc88a;"></div>
<svg style="left:602px;top:441.5px;" width="21" height="13" viewBox="0 0 21 13"><path d="M6 0H21V13H6L0 6.5Z" fill="#ffc20e"/><path d="M6 0H21V6.5H0Z" fill="#ffd966"/></svg>
<div class="t" style="left:628.00px;top:441.66px;font-size:13.4px;color:#111;font-weight:normal;">BirthDate</div>
<div class="a" style="left:802px;top:444px;width:16px;height:8px;background:#5fc88a;"></div>
<svg style="left:602px;top:461.5px;" width="21" height="13" viewBox="0 0 21 13"><path d="M6 0H21V13H6L0 6.5Z" fill="#ffc20e"/><path d="M6 0H21V6.5H0Z" fill="#ffd966"/></svg>
<div class="t" style="left:628.00px;top:461.66px;font-size:13.4px;color:#111;font-weight:normal;">HireDate</div>
<div class="a" style="left:802px;top:464px;width:16px;height:8px;background:#5fc88a;"></div>
<svg style="left:602px;top:481.5px;" width="21" height="13" viewBox="0 0 21 13"><path d="M6 0H21V13H6L0 6.5Z" fill="#ffc20e"/><path d="M6 0H21V6.5H0Z" fill="#ffd966"/></svg>
<div class="t" style="left:628.00px;top:481.66px;font-size:13.4px;color:#111;font-weight:normal;">Address</div>
<div class="a" style="left:802px;top:484px;width:16px;height:8px;background:#5fc88a;"></div>
<svg style="left:602px;top:501.5px;" width="21" height="13" viewBox="0 0 21 13"><path d="M6 0H21V13H6L0 6.5Z" fill="#ffc20e"/><path d="M6 0H21V6.5H0Z" fill="#ffd966"/></svg>
<div class="t" style="left:628.00px;top:501.66px;font-size:13.4px;color:#111;font-weight:normal;">City</div>
<div class="a" style="left:802px;top:504px;width:16px;height:8px;background:#5fc88a;"></div>
<svg style="left:602px;top:521.5px;" width="21" height="13" viewBox="0 0 21 13"><path d="M6 0H21V13H6L0 6.5Z" fill="#ffc20e"/><path d="M6 0H21V6.5H0Z" fill="#ffd966"/></svg>
<div class="t" style="left:628.00px;top:521.66px;font-size:13.4px;color:#111;font-weight:normal;">Region</div>
<div class="a" style="left:802px;top:524px;width:16px;height:8px;background:#5fc88a;"></div>
<svg style="left:602px;top:541.5px;" width="21" height="13" viewBox="0 0 21 13"><path d="M6 0H21V13H6L0 6.5Z" fill="#ffc20e"/><path d="M6 0H21V6.5H0Z" fill="#ffd966"/></svg>
<div class="t" style="left:628.00px;top:541.66px;font-size:13.4px;color:#111;font-weight:normal;">PostalCode</div>
<div class="a" style="left:802px;top:544px;width:16px;height:8px;background:#5fc88a;"></div>
<svg style="left:602px;top:561.5px;" width="21" height="13" viewBox="0 0 21 13"><path d="M6 0H21V13H6L0 6.5Z" fill="#ffc20e"/><path d="M6 0H21V6.5H0Z" fill="#ffd966"/></svg>
<div class="t" style="left:628.00px;top:561.66px;font-size:13.4px;color:#111;font-weight:normal;">Country</div>
<div class="a" style="left:802px;top:564px;width:16px;height:8px;background:#5fc88a;"></div>
<svg style="left:602px;top:581.5px;" width="21" height="13" viewBox="0 0 21 13"><path d="M6 0H21V13H6L0 6.5Z" fill="#ffc20e"/><path d="M6 0H21V6.5H0Z" fill="#ffd966"/></svg>
<div class="t" style="left:628.00px;top:581.66px;font-size:13.4px;color:#111;font-weight:normal;">HomePhone</div>
<div class="a" style="left:802px;top:584px;width:16px;height:8px;background:#5fc88a;"></div>
<svg style="left:602px;top:601.5px;" width="21" height="13" viewBox="0 0 21 13"><path d="M6 0H21V13H6L0 6.5Z" fill="#ffc20e"/><path d="M6 0H21V6.5H0Z" fill="#ffd966"/></svg>
<div class="t" style="left:628.00px;top:601.66px;font-size:13.4px;color:#111;font-weight:normal;">Extension</div>
<div class="a" style="left:802px;top:604px;width:16px;height:8px;background:#5fc88a;"></div>
<div class="a" style="left:1061px;top:279px;width:238px;height:434px;background:#a3b5cc;border-radius:10px;"></div>
<div class="a" style="left:1056px;top:274px;width:238px;height:434px;background:#fefefc;border-radius:10px;overflow:hidden;"></div>
<div class="a" style="left:1056px;top:274px;width:238px;height:43px;background:#c9aa4f;border-radius:10px 10px 0 0;"></div>
<svg style="left:1068px;top:287px;" width="21" height="18" viewBox="0 0 21 18"><rect x="0.5" y="0.5" width="20" height="17" fill="#f3f3f3" stroke="#999"/><rect x="0.5" y="0.5" width="20" height="3" fill="#888"/><path d="M2 6h4M2 9h4M2 12h4M2 15h4" stroke="#aaa"/><rect x="8" y="5" width="11" height="11" fill="#f2c98a"/><path d="M17 9 Q12 7 12 11 Q12 15 17 13" stroke="#3a7ac8" stroke-width="1.6" fill="none"/></svg>
<div class="t" style="left:1097.50px;top:287.61px;font-size:17px;color:#fff;font-weight:normal;">Employees_Database</div>
<svg style="left:1267px;top:286px;" width="18" height="18" viewBox="0 0 18 18"><circle cx="9" cy="9" r="8.7" fill="#8a7338"/><path d="M9 4.2L14 12H4Z" fill="#fff"/></svg>
<svg style="left:1065px;top:320.5px;" width="15" height="15" viewBox="0 0 15 15"><rect x="1" y="1" width="13" height="13" rx="2" fill="#fff" stroke="#555" stroke-width="1.5"/><path d="M4 7.5H11" stroke="#333" stroke-width="1.6"/></svg>
<svg style="left:1085px;top:319.5px;" width="17" height="17" viewBox="0 0 17 17"><rect x="0" y="0" width="17" height="17" fill="#5dbb5d"/><rect x="2.5" y="2.5" width="12" height="12" fill="#a6e09e"/></svg>
<div class="t" style="left:1109.00px;top:321.66px;font-size:13.4px;color:#111;font-weight:bold;">Employees_Database</div>
<svg style="left:1080px;top:340.5px;" width="15" height="15" viewBox="0 0 15 15"><rect x="1" y="1" width="13" height="13" rx="2" fill="#fff" stroke="#555" stroke-width="1.5"/><path d="M4 7.5H11" stroke="#333" stroke-width="1.6"/></svg>
<svg style="left:1100px;top:339.5px;" width="17" height="17" viewBox="0 0 17 17"><rect x="0" y="0" width="17" height="17" fill="#5b93d3"/><path d="M8.5 4.5V11 M5.5 8.5L8.5 11.5L11.5 8.5" stroke="#fff" stroke-width="2" fill="none"/></svg>
<div class="t" style="left:1124.00px;top:341.66px;font-size:13.4px;color:#111;font-weight:bold;">Input_Insert</div>
<svg style="left:1042px;top:344.5px;" width="13" height="7" viewBox="0 0 13 7"><path d="M0 0.5L12.5 3.2L0 6.5Z" fill="#f4f6f8"/></svg>
<svg style="left:1099px;top:361.5px;" width="21" height="13" viewBox="0 0 21 13"><path d="M6 0H21V13H6L0 6.5Z" fill="#ffc20e"/><path d="M6 0H21V6.5H0Z" fill="#ffd966"/></svg>
<div class="t" style="left:1124.00px;top:361.66px;font-size:13.4px;color:#111;font-weight:normal;">EmployeeID</div>
<svg style="left:1041px;top:363.5px;" width="15" height="9" viewBox="0 0 15 9"><path d="M0 0.3L15 4.3L0 8.7Z" fill="#5ccf86"/></svg>
<svg style="left:1099px;top:381.5px;" width="21" height="13" viewBox="0 0 21 13"><path d="M6 0H21V13H6L0 6.5Z" fill="#ffc20e"/><path d="M6 0H21V6.5H0Z" fill="#ffd966"/></svg>
<div class="t" style="left:1124.00px;top:381.66px;font-size:13.4px;color:#111;font-weight:normal;">LastName</div>
<svg style="left:1041px;top:383.5px;" width="15" height="9" viewBox="0 0 15 9"><path d="M0 0.3L15 4.3L0 8.7Z" fill="#5ccf86"/></svg>
<svg style="left:1099px;top:401.5px;" width="21" height="13" viewBox="0 0 21 13"><path d="M6 0H21V13H6L0 6.5Z" fill="#ffc20e"/><path d="M6 0H21V6.5H0Z" fill="#ffd966"/></svg>
<div class="t" style="left:1124.00px;top:401.66px;font-size:13.4px;color:#111;font-weight:normal;">FirstName</div>
<svg style="left:1041px;top:403.5px;" width="15" height="9" viewBox="0 0 15 9"><path d="M0 0.3L15 4.3L0 8.7Z" fill="#5ccf86"/></svg>
<svg style="left:1099px;top:421.5px;" width="21" height="13" viewBox="0 0 21 13"><path d="M6 0H21V13H6L0 6.5Z" fill="#ffc20e"/><path d="M6 0H21V6.5H0Z" fill="#ffd966"/></svg>
<div class="t" style="left:1124.00px;top:421.66px;font-size:13.4px;color:#111;font-weight:normal;">Title</div>
<svg style="left:1041px;top:423.5px;" width="15" height="9" viewBox="0 0 15 9"><path d="M0 0.3L15 4.3L0 8.7Z" fill="#5ccf86"/></svg>
<svg style="left:1099px;top:441.5px;" width="21" height="13" viewBox="0 0 21 13"><path d="M6 0H21V13H6L0 6.5Z" fill="#ffc20e"/><path d="M6 0H21V6.5H0Z" fill="#ffd966"/></svg>
<div class="t" style="left:1124.00px;top:441.66px;font-size:13.4px;color:#111;font-weight:normal;">TitleOfCourtesy</div>
<svg style="left:1041px;top:443.5px;" width="15" height="9" viewBox="0 0 15 9"><path d="M0 0.3L15 4.3L0 8.7Z" fill="#5ccf86"/></svg>
<svg style="left:1099px;top:461.5px;" width="21" height="13" viewBox="0 0 21 13"><path d="M6 0H21V13H6L0 6.5Z" fill="#ffc20e"/><path d="M6 0H21V6.5H0Z" fill="#ffd966"/></svg>
<div class="t" style="left:1124.00px;top:461.66px;font-size:13.4px;color:#111;font-weight:normal;">BirthDate</div>
<svg style="left:1041px;top:463.5px;" width="15" height="9" viewBox="0 0 15 9"><path d="M0 0.3L15 4.3L0 8.7Z" fill="#5ccf86"/></svg>
<svg style="left:1099px;top:481.5px;" width="21" height="13" viewBox="0 0 21 13"><path d="M6 0H21V13H6L0 6.5Z" fill="#ffc20e"/><path d="M6 0H21V6.5H0Z" fill="#ffd966"/></svg>
<div class="t" style="left:1124.00px;top:481.66px;font-size:13.4px;color:#111;font-weight:normal;">HireDate</div>
<svg style="left:1041px;top:483.5px;" width="15" height="9" viewBox="0 0 15 9"><path d="M0 0.3L15 4.3L0 8.7Z" fill="#5ccf86"/></svg>
<svg style="left:1099px;top:501.5px;" width="21" height="13" viewBox="0 0 21 13"><path d="M6 0H21V13H6L0 6.5Z" fill="#ffc20e"/><path d="M6 0H21V6.5H0Z" fill="#ffd966"/></svg>
<div class="t" style="left:1124.00px;top:501.66px;font-size:13.4px;color:#111;font-weight:normal;">Address</div>
<svg style="left:1041px;top:503.5px;" width="15" height="9" viewBox="0 0 15 9"><path d="M0 0.3L15 4.3L0 8.7Z" fill="#5ccf86"/></svg>
<svg style="left:1099px;top:521.5px;" width="21" height="13" viewBox="0 0 21 13"><path d="M6 0H21V13H6L0 6.5Z" fill="#ffc20e"/><path d="M6 0H21V6.5H0Z" fill="#ffd966"/></svg>
<div class="t" style="left:1124.00px;top:521.66px;font-size:13.4px;color:#111;font-weight:normal;">City</div>
<svg style="left:1041px;top:523.5px;" width="15" height="9" viewBox="0 0 15 9"><path d="M0 0.3L15 4.3L0 8.7Z" fill="#5ccf86"/></svg>
<svg style="left:1099px;top:541.5px;" width="21" height="13" viewBox="0 0 21 13"><path d="M6 0H21V13H6L0 6.5Z" fill="#ffc20e"/><path d="M6 0H21V6.5H0Z" fill="#ffd966"/></svg>
<div class="t" style="left:1124.00px;top:541.66px;font-size:13.4px;color:#111;font-weight:normal;">Region</div>
<svg style="left:1041px;top:543.5px;" width="15" height="9" viewBox="0 0 15 9"><path d="M0 0.3L15 4.3L0 8.7Z" fill="#5ccf86"/></svg>
<svg style="left:1099px;top:561.5px;" width="21" height="13" viewBox="0 0 21 13"><path d="M6 0H21V13H6L0 6.5Z" fill="#ffc20e"/><path d="M6 0H21V6.5H0Z" fill="#ffd966"/></svg>
<div class="t" style="left:1124.00px;top:561.66px;font-size:13.4px;color:#111;font-weight:normal;">PostalCode</div>
<svg style="left:1041px;top:563.5px;" width="15" height="9" viewBox="0 0 15 9"><path d="M0 0.3L15 4.3L0 8.7Z" fill="#5ccf86"/></svg>
<svg style="left:1099px;top:581.5px;" width="21" height="13" viewBox="0 0 21 13"><path d="M6 0H21V13H6L0 6.5Z" fill="#ffc20e"/><path d="M6 0H21V6.5H0Z" fill="#ffd966"/></svg>
<div class="t" style="left:1124.00px;top:581.66px;font-size:13.4px;color:#111;font-weight:normal;">Country</div>
<svg style="left:1041px;top:583.5px;" width="15" height="9" viewBox="0 0 15 9"><path d="M0 0.3L15 4.3L0 8.7Z" fill="#5ccf86"/></svg>
<svg style="left:1099px;top:601.5px;" width="21" height="13" viewBox="0 0 21 13"><path d="M6 0H21V13H6L0 6.5Z" fill="#ffc20e"/><path d="M6 0H21V6.5H0Z" fill="#ffd966"/></svg>
<div class="t" style="left:1124.00px;top:601.66px;font-size:13.4px;color:#111;font-weight:normal;">HomePhone</div>
<svg style="left:1041px;top:603.5px;" width="15" height="9" viewBox="0 0 15 9"><path d="M0 0.3L15 4.3L0 8.7Z" fill="#5ccf86"/></svg>
<svg style="left:1099px;top:621.5px;" width="21" height="13" viewBox="0 0 21 13"><path d="M6 0H21V13H6L0 6.5Z" fill="#ffc20e"/><path d="M6 0H21V6.5H0Z" fill="#ffd966"/></svg>
<div class="t" style="left:1124.00px;top:621.66px;font-size:13.4px;color:#111;font-weight:normal;">Extension</div>
<svg style="left:1041px;top:623.5px;" width="15" height="9" viewBox="0 0 15 9"><path d="M0 0.3L15 4.3L0 8.7Z" fill="#5ccf86"/></svg>
<svg style="left:1099px;top:641.5px;" width="21" height="13" viewBox="0 0 21 13"><path d="M6 0H21V13H6L0 6.5Z" fill="#ffc20e"/><path d="M6 0H21V6.5H0Z" fill="#ffd966"/></svg>
<div class="t" style="left:1124.00px;top:641.66px;font-size:13.4px;color:#111;font-weight:normal;">Deprtment</div>
<svg style="left:1042px;top:644.5px;" width="13" height="7" viewBox="0 0 13 7"><path d="M0 0.5L12.5 3.2L0 6.5Z" fill="#f4f6f8"/></svg>
<svg style="left:1080px;top:660.5px;" width="15" height="15" viewBox="0 0 15 15"><rect x="1" y="1" width="13" height="13" rx="2" fill="#fff" stroke="#555" stroke-width="1.5"/><path d="M4 7.5H11" stroke="#333" stroke-width="1.6"/><path d="M7.5 4V11" stroke="#333" stroke-width="1.6"/></svg>
<svg style="left:1100px;top:659.5px;" width="17" height="17" viewBox="0 0 17 17"><rect x="0" y="0" width="17" height="17" fill="#5b93d3"/><path d="M8.5 4.5V11 M5.5 8.5L8.5 11.5L11.5 8.5" stroke="#fff" stroke-width="2" fill="none"/></svg>
<div class="t" style="left:1124.00px;top:661.66px;font-size:13.4px;color:#111;font-weight:bold;">Output</div>
<div class="a" style="left:1295px;top:664px;width:16px;height:8px;background:#fdfdfd;"></div>
<svg style="left:584px;top:721px;" width="17" height="17" viewBox="0 0 17 17"><rect x="0.5" y="0.5" width="16" height="16" rx="3" fill="#2f86c9" stroke="#e8f0f8"/><text x="8.5" y="13" text-anchor="middle" font-size="11" fill="#fff" font-family="Liberation Sans">S</text></svg>
<div class="a" style="left:584px;top:749px;width:227px;height:108px;background:#a3b5cc;border-radius:10px;"></div>
<div class="a" style="left:579px;top:744px;width:227px;height:108px;background:#fefefc;border-radius:10px;overflow:hidden;"></div>
<div class="a" style="left:579px;top:744px;width:227px;height:43px;background:#d8935d;border-radius:10px 10px 0 0;"></div>
<svg style="left:587.4px;top:752.9px" width="25.7" height="25.7" viewBox="0 0 36 36"><path d="M26.5 9.5 C25 5.5, 18 5, 13 10 C8 15, 5.5 24, 9 28 C12 31.5, 20 30.5, 28.5 20 L27.8 19.4 C22 26, 16 27.5, 13 25.5 C10.5 23.5, 11.5 17, 15 12 C17.5 8.5, 21 7, 23.5 8 C24.8 8.6, 24.5 10, 23.5 10.5Z" fill="#2b2b2b" stroke="#2b2b2b" stroke-width="2"/><circle cx="24.6" cy="12" r="2.7" fill="#2b2b2b"/></svg>
<div class="t" style="left:620.00px;top:757.44px;font-size:17.2px;color:#fff;font-weight:normal;">ConstantValue</div>
<svg style="left:778.5px;top:756.5px;" width="18" height="18" viewBox="0 0 18 18"><circle cx="9" cy="9" r="8.7" fill="#8e6446"/><path d="M9 4.2L14 12H4Z" fill="#fff"/></svg>
<svg style="left:588px;top:790.5px;" width="15" height="15" viewBox="0 0 15 15"><rect x="1" y="1" width="13" height="13" rx="2" fill="#fff" stroke="#555" stroke-width="1.5"/><path d="M4 7.5H11" stroke="#333" stroke-width="1.6"/></svg>
<svg style="left:608px;top:789.5px;" width="17" height="17" viewBox="0 0 17 17"><rect x="0" y="0" width="17" height="17" fill="#5dbb5d"/><rect x="2.5" y="2.5" width="12" height="12" fill="#a6e09e"/></svg>
<div class="t" style="left:631.50px;top:791.66px;font-size:13.4px;color:#111;font-weight:bold;">ConstantValue</div>
<div class="a" style="left:806px;top:794px;width:16px;height:8px;background:#fdfdfd;"></div>
<svg style="left:606px;top:811.5px;" width="21" height="13" viewBox="0 0 21 13"><path d="M6 0H21V13H6L0 6.5Z" fill="#ffc20e"/><path d="M6 0H21V6.5H0Z" fill="#ffd966"/></svg>
<div class="t" style="left:631.50px;top:811.66px;font-size:13.4px;color:#111;font-weight:normal;">Value</div>
<div class="a" style="left:806px;top:814px;width:16px;height:8px;background:#fdfdfd;"></div>
<svg style="left:1210px;top:856px;" width="12" height="19" viewBox="0 0 12 19"><path d="M0.5 0.5V15.5L4 12.5L6.5 18L9 17L6.5 11.5H11Z" fill="#fff" stroke="#111" stroke-width="1"/></svg>
<div class="a" style="left:1605px;top:118px;width:313px;height:1px;background:#d4dce7;"></div>
<div class="a" style="left:1605px;top:118px;width:1px;height:833px;background:#d4dce7;"></div>
<div class="a" style="left:1911px;top:118px;width:1px;height:833px;background:#dbe2ea;"></div>
<div class="t" style="left:1610.00px;top:131.98px;font-size:14.2px;color:#3a3a3a;font-weight:normal;">Server Explorer</div>
<svg style="left:1861px;top:139px;" width="9" height="5" viewBox="0 0 9 5"><path d="M0 0H9L4.5 5Z" fill="#222"/></svg>
<svg style="left:1879px;top:134px;" width="9" height="12" viewBox="0 0 9 12"><path d="M2 0.8H7M2.5 1V7M6.5 1V7M0 7.3H9M4.5 7.5V11.5" stroke="#222" stroke-width="1.5" fill="none"/></svg>
<svg style="left:1896px;top:134px;" width="11" height="10" viewBox="0 0 11 10"><path d="M1 1L10 9M10 1L1 9" stroke="#222" stroke-width="2.4"/></svg>
<div class="a" style="left:1606px;top:160px;width:305px;height:50px;background:#f5f7f9;"></div>
<div class="t" style="left:1617.00px;top:177.30px;font-size:15px;color:#111;font-weight:normal;"><u>C</u>onfigure</div>
<svg style="left:1685px;top:184px;" width="7" height="4" viewBox="0 0 7 4"><path d="M0 0H7L3.5 4Z" fill="#111"/></svg>
<svg style="left:1707px;top:175px;" width="25" height="21" viewBox="0 0 25 21"><path d="M4 9 A9 8.5 0 0 1 20 6" stroke="#3cc43c" stroke-width="3" fill="none"/><path d="M21 12 A9 8.5 0 0 1 5 15" stroke="#3cc43c" stroke-width="3" fill="none"/><path d="M16.5 5.5L23 3L22 10Z M8.5 15.5L2 18L3 11Z" fill="#3cc43c"/></svg>
<svg style="left:1744px;top:172px;" width="18" height="25" viewBox="0 0 18 25"><circle cx="4" cy="5" r="3.5" fill="#f7e04a"/><rect x="7.5" y="3.5" width="9" height="20" fill="#fff" stroke="#888"/><path d="M9.5 7h5M9.5 10h5M8 13.5h8" stroke="#999"/><rect x="9" y="19" width="1.5" height="1.5" fill="#2a9a6a"/></svg>
<div class="a" style="left:1778px;top:170px;width:1px;height:30px;background:#b9c0ca;"></div>
<svg style="left:1790px;top:174px;" width="24" height="20" viewBox="0 0 24 20"><rect x="0.5" y="0.5" width="23" height="19" fill="#fafafa" stroke="#b5b5b5"/><rect x="0.5" y="0.5" width="23" height="2.5" fill="#b5b5b5"/><path d="M3 10h7M13 6h8M13 9h8M13 12h8M13 15h8" stroke="#bbb" stroke-width="1.5"/></svg>
<svg style="left:1827px;top:172px;" width="25" height="23" viewBox="0 0 25 23"><rect x="0.5" y="4.5" width="20" height="18" fill="#fafafa" stroke="#b5b5b5"/><path d="M3 9h14M3 13h14M3 17h14M3 21h14" stroke="#c5c5c5"/><circle cx="18" cy="6" r="5.5" fill="#fafafa" stroke="#aaa"/><path d="M18 3V6H20.5" stroke="#aaa" fill="none"/></svg>
<svg style="left:1864px;top:171px;" width="26" height="25" viewBox="0 0 26 25"><rect x="5.5" y="0.5" width="13" height="10" fill="#fafafa" stroke="#b5b5b5"/><path d="M12 11V15M2 15H22M2 15V19M12 15V19" stroke="#b5b5b5" fill="none"/><rect x="0" y="19" width="4" height="3" fill="#bbb"/><rect x="10" y="19" width="4" height="3" fill="#bbb"/><path d="M14 18L18 22L25 13" stroke="#c8c8c8" stroke-width="2.2" fill="none"/></svg>
<div class="a" style="left:1898px;top:170px;width:1px;height:30px;background:#b9c0ca;"></div>
<div class="a" style="left:1607px;top:210px;width:303px;height:740px;background:#fefefe;"></div>
<div class="a" style="left:1606px;top:210px;width:1px;height:741px;background:#d6dde7;"></div>
<div class="a" style="left:1910px;top:210px;width:1px;height:741px;background:#d6dde7;"></div>
<svg style="left:1616px;top:216px;" width="13" height="12" viewBox="0 0 13 12"><rect x="0.5" y="0.5" width="12" height="11" fill="#f4f4f4" stroke="#a8a8a8"/><path d="M3 6H10" stroke="#2a5ca6" stroke-width="1.4"/></svg>
<svg style="left:1629px;top:221px;" width="6" height="1" viewBox="0 0 6 1"><path d="M0 0.5H6" stroke="#777" stroke-dasharray="1 1"/></svg>
<svg style="left:1635px;top:211px;" width="22" height="21" viewBox="0 0 22 21"><rect x="0.5" y="3.5" width="10" height="17" fill="#7f98b5" stroke="#404b57"/><rect x="2" y="5" width="7" height="14" fill="#b8c9dc"/><rect x="11.5" y="0.5" width="10" height="17" fill="#7f98b5" stroke="#404b57"/><rect x="13" y="2" width="7" height="14" fill="#b8c9dc"/><rect x="3" y="6" width="2" height="2" fill="#2ec02e"/><rect x="14" y="3" width="2" height="2" fill="#2ec02e"/><path d="M3 11h5M3 14h5M14 8h5M14 11h5" stroke="#5c708a"/></svg>
<div class="t" style="left:1661.00px;top:215.83px;font-size:13.2px;color:#333;font-weight:normal;">Server Connections</div>
<svg style="left:1645px;top:232px;" width="1" height="6" viewBox="0 0 1 6"><path d="M0.5 0V6" stroke="#777" stroke-dasharray="1 1"/></svg>
<svg style="left:1640px;top:236px;" width="13" height="12" viewBox="0 0 13 12"><rect x="0.5" y="0.5" width="12" height="11" fill="#f4f4f4" stroke="#a8a8a8"/><path d="M3 6H10" stroke="#2a5ca6" stroke-width="1.4"/></svg>
<svg style="left:1653px;top:241px;" width="6" height="1" viewBox="0 0 6 1"><path d="M0.5 0.5H6" stroke="#777" stroke-dasharray="1 1"/></svg>
<svg style="left:1659px;top:231px;" width="22" height="21" viewBox="0 0 22 21"><rect x="0.5" y="3.5" width="10" height="17" fill="#7f98b5" stroke="#404b57"/><rect x="2" y="5" width="7" height="14" fill="#b8c9dc"/><rect x="11.5" y="0.5" width="10" height="17" fill="#7f98b5" stroke="#404b57"/><rect x="13" y="2" width="7" height="14" fill="#b8c9dc"/><rect x="3" y="6" width="2" height="2" fill="#2ec02e"/><rect x="14" y="3" width="2" height="2" fill="#2ec02e"/><path d="M3 11h5M3 14h5M14 8h5M14 11h5" stroke="#5c708a"/></svg>
<div class="t" style="left:1685.00px;top:235.15px;font-size:14px;color:#333;font-weight:normal;">DEFAULT</div>
<svg style="left:1668px;top:252px;" width="15" height="10" viewBox="0 0 15 10"><path d="M0.5 0V9.5H15" stroke="#777" stroke-dasharray="1 1" fill="none"/></svg>
<svg style="left:1683px;top:252px;" width="20" height="20" viewBox="0 0 20 20"><path d="M1 2 L8 0 L15 2 V17 L8 19 L1 17Z" fill="#c9d0da" stroke="#5f6b7a"/><path d="M8 0V19" stroke="#8894a3"/><path d="M11 12h4v-2.5l4 4.5l-4 4.5v-2.5h-4Z" fill="#2fb03a"/></svg>
<div class="t" style="left:1709.00px;top:255.15px;font-size:14px;color:#333;font-weight:normal;">HTTPS://ASTWKS251:9260</div>
<div class="a" style="left:1605px;top:954px;width:131px;height:38px;background:#d8dce3;"></div>
<div class="t" style="left:1621.00px;top:965.06px;font-size:14.1px;color:#222;font-weight:normal;">Server Explorer</div>
<div class="t" style="left:1752.00px;top:964.90px;font-size:14.3px;color:#222;font-weight:normal;">Sql Snippets</div>
</body></html>
